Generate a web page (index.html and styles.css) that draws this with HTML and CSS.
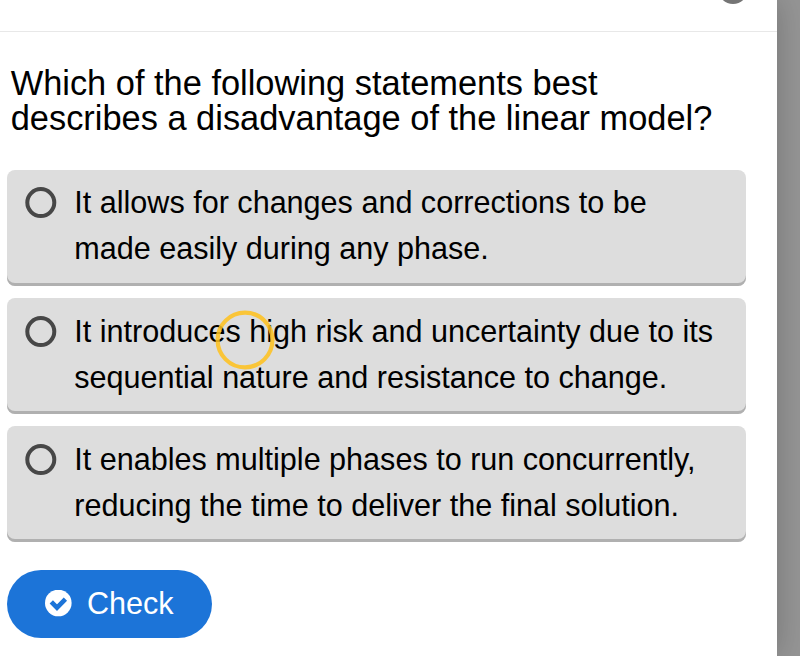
FILE: index.html
```html
<!DOCTYPE html>
<html lang="en">
<head>
<meta charset="utf-8">
<title>Question</title>
<link rel="stylesheet" href="styles.css">
</head>
<body>
<main class="page">
  <header class="topbar"><span class="knob"></span></header>
  <h1 class="question">Which of the following statements best<br>describes a disadvantage of the linear model?</h1>
  <ul class="answers">
    <li class="answer"><svg class="radio" viewBox="0 0 32 32"><circle cx="15.8" cy="15.6" r="13.5"/></svg><span>It allows for changes and corrections to be<br>made easily during any phase.</span></li>
    <li class="answer"><svg class="radio" viewBox="0 0 32 32"><circle cx="15.8" cy="15.6" r="13.5"/></svg><span>It introduces high risk and uncertainty due to its<br>sequential nature and resistance to change.</span></li>
    <li class="answer"><svg class="radio" viewBox="0 0 32 32"><circle cx="15.8" cy="15.6" r="13.5"/></svg><span>It enables multiple phases to run concurrently,<br>reducing the time to deliver the final solution.</span></li>
  </ul>
  <button class="check"><svg class="tick" viewBox="0 0 28 28"><circle cx="14.3" cy="13" r="13.3"/><path d="M7.3 11.8L13 17.7L21.4 9.1"/></svg><span class="check-label">Check</span></button>
</main>
<svg class="pointer" viewBox="0 0 60 60"><circle cx="30" cy="30" r="27.4"/></svg>
</body>
</html>
```
FILE: styles.css
```css
* { box-sizing: border-box; }
body {
  margin: 0;
  height: 656px;
  overflow: hidden;
  background: #959595;
  font-family: "Liberation Sans", Arial, sans-serif;
  color: #000;
}
.page {
  width: 777px;
  height: 656px;
  background: #fff;
  box-shadow: 0 0 30px rgba(0, 0, 0, 0.22);
}
.topbar {
  position: relative;
  height: 32px;
  border-bottom: 1px solid #e8e8e8;
}
.knob {
  position: absolute;
  left: 718px;
  top: -26px;
  width: 30px;
  height: 30px;
  border-radius: 50%;
  background: #757575;
}
.question {
  margin: 0;
  padding: 34px 0 0 10.7px;
  font-size: 34.4px;
  line-height: 35px;
  font-weight: 400;
  white-space: nowrap;
}
.answers {
  list-style: none;
  margin: 34px 0 0 7px;
  padding: 0;
  width: 739px;
  display: grid;
  gap: 12px;
}
.answer {
  height: 116px;
  display: flex;
  gap: 17.3px;
  padding: 9px 0 0 18px;
  border-radius: 8px;
  background: #ddd;
  box-shadow: inset 0 -3px #b0b0b0;
  font-size: 30.57px;
  line-height: 46px;
  white-space: nowrap;
}
.answer + .answer { padding-top: 10px; }
.radio {
  width: 32px;
  height: 32px;
  margin-top: 8px;
  flex: none;
  fill: none;
  stroke: #474747;
  stroke-width: 4;
}
.check {
  display: flex;
  align-items: center;
  gap: 15px;
  width: 205px;
  height: 68px;
  margin: 28px 0 0 7px;
  padding: 0 0 0 37px;
  border: 0;
  border-radius: 34px;
  background: #1c74d8;
  color: #fff;
  font: 30.57px "Liberation Sans", Arial, sans-serif;
}
.check-label { padding-bottom: 2px; }
.tick { width: 28px; height: 28px; }
.tick circle { fill: #fff; }
.tick path { fill: none; stroke: #1c74d8; stroke-width: 4.6; }
.pointer {
  position: absolute;
  left: 215px;
  top: 310px;
  width: 60px;
  height: 60px;
  fill: none;
  stroke: rgba(255, 193, 29, 0.86);
  stroke-width: 4.2;
}
```
